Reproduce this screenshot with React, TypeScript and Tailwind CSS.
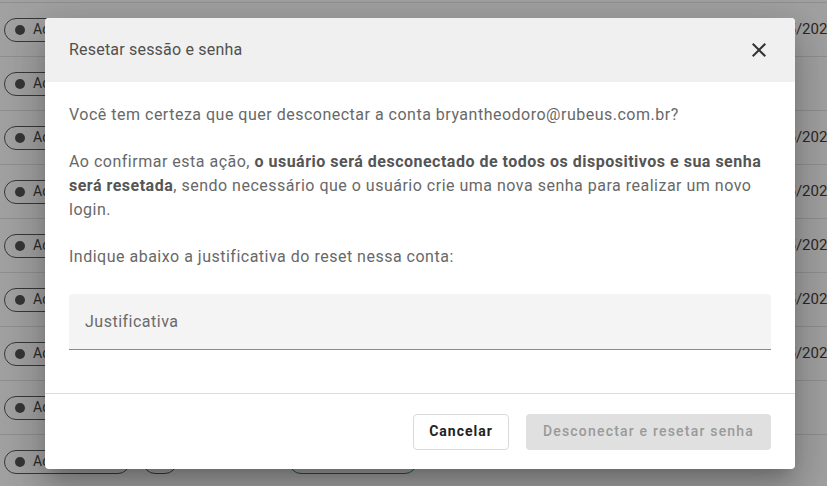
import React from 'react';

const rows = [
  { date: true },
  { date: false },
  { date: true },
  { date: true },
  { date: true },
  { date: true },
  { date: true },
  { date: false },
  { date: false },
];

const CloseIcon: React.FC = () => (
  <svg width="24" height="24" viewBox="0 0 24 24" fill="#333333">
    <path d="M19 6.41L17.59 5 12 10.59 6.41 5 5 6.41 10.59 12 5 17.59 6.41 19 12 13.41 17.59 19 19 17.59 13.41 12z" />
  </svg>
);

const TableRow: React.FC<{ date: boolean }> = ({ date }) => (
  <div className="h-[54px] border-b border-[#e2e2e2] flex items-center pl-[4px] shrink-0">
    <div className="w-[126px] h-[24px] rounded-full border border-[#5a5a5a] flex items-center gap-[8px] pl-[10px] shrink-0 overflow-hidden">
      <span className="w-[10px] h-[10px] rounded-full bg-[#555] shrink-0" />
      <span className="text-[14px] text-[#444] whitespace-nowrap">Acesso liberado</span>
    </div>
    <div className="ml-[13px] w-[34px] h-[24px] rounded-full border border-[#5a5a5a] shrink-0" />
    <div className="ml-[112px] w-[128px] h-[24px] rounded-full border border-[#1f8a6e] shrink-0" />
    {date && (
      <span className="ml-[339px] text-[15px] text-[#4a3f36] whitespace-nowrap">12/05/2023</span>
    )}
  </div>
);

export default function App() {
  return (
    <div
      className="relative w-[827px] h-[486px] overflow-hidden bg-white"
      style={{ fontFamily: 'Roboto, "Liberation Sans", sans-serif' }}
    >
      {/* background table */}
      <div className="flex flex-col">
        <div className="h-[3px] border-b border-[#e2e2e2] shrink-0" />
        {rows.map((r, i) => (
          <TableRow key={i} date={r.date} />
        ))}
      </div>

      {/* overlay + dialog */}
      <div className="absolute inset-0 bg-black/[0.37] flex items-start justify-start pt-[18px] pl-[45px]">
        <div className="w-[750px] bg-white rounded-[4px] overflow-hidden shadow-[0_11px_15px_-7px_rgba(0,0,0,0.2),0_24px_38px_3px_rgba(0,0,0,0.14),0_9px_46px_8px_rgba(0,0,0,0.12)]">
          <div className="h-[64px] bg-[#eff0ef] flex items-center justify-between pl-[24px] pr-[24px]">
            <h2 className="text-[16px] text-[#505050] tracking-[0.2px]">Resetar sessão e senha</h2>
            <button className="w-[24px] h-[24px] flex items-center justify-center">
              <CloseIcon />
            </button>
          </div>

          <div className="px-[24px] pt-[21px] pb-[43px] text-[16px] leading-[24px] text-[#686868] tracking-[0.5px]">
            <p>Você tem certeza que quer desconectar a conta bryantheodoro@rubeus.com.br?</p>
            <p className="mt-[23px]">
              Ao confirmar esta ação,{' '}
              <strong className="font-bold text-[#555]">
                o usuário será desconectado de todos os dispositivos e sua senha será resetada
              </strong>
              , sendo necessário que o usuário crie uma nova senha para realizar um novo login.
            </p>
            <p className="mt-[23px]">Indique abaixo a justificativa do reset nessa conta:</p>
            <div className="mt-[25px] h-[56px] bg-[#f4f4f4] rounded-t-[4px] border-b border-[#8a8a8a] flex items-center px-[16px]">
              <span className="text-[16px] text-[#6a6a6a]">Justificativa</span>
            </div>
          </div>

          <div className="border-t border-[#dcdcdc] h-[76px] flex items-center justify-end gap-[17px] px-[24px]">
            <button className="h-[36px] w-[96px] rounded-[4px] border border-[#dadada] bg-white text-[14px] font-bold text-[#222] tracking-[1px]">
              Cancelar
            </button>
            <button className="h-[36px] w-[245px] rounded-[4px] bg-[#e0e0e0] text-[14px] font-medium text-[#9a9a9a] tracking-[1.2px]">
              Desconectar e resetar senha
            </button>
          </div>
        </div>
      </div>
    </div>
  );
}
